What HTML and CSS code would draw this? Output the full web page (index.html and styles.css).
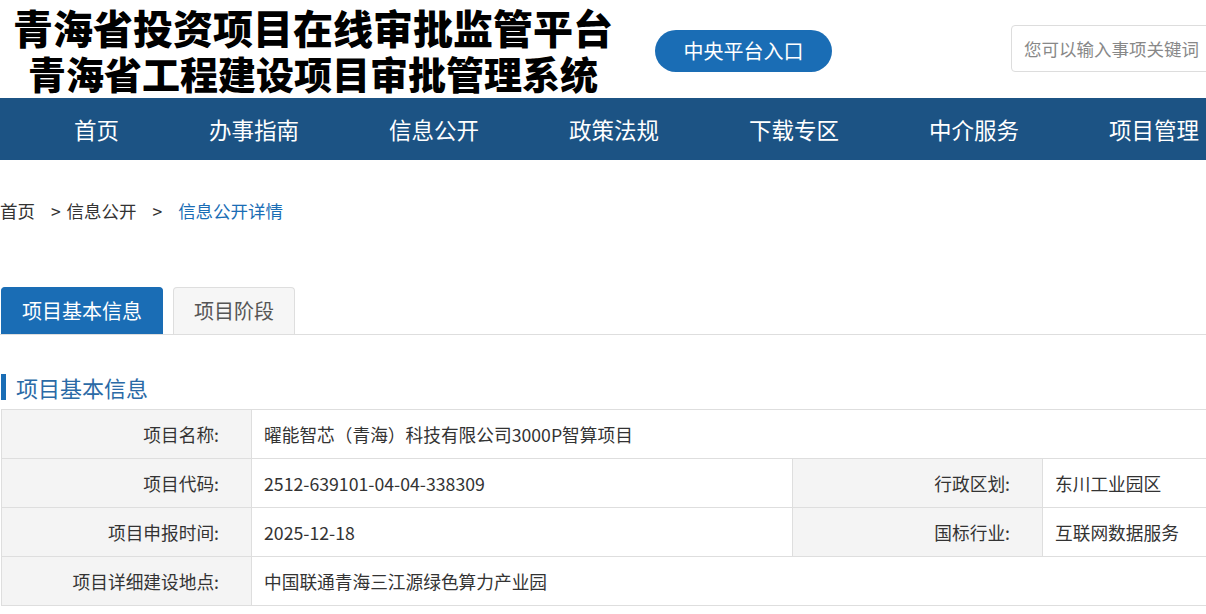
FILE: index.html
```html
<!DOCTYPE html>
<html lang="zh-CN">
<head>
  <meta charset="UTF-8" />
  <title>青海省投资项目在线审批监管平台</title>
  <link rel="stylesheet" href="styles.css">
</head>
<body>
  <header class="top">
    <div class="logo">
      <div class="logo-line one">青海省投资项目在线审批监管平台</div>
      <div class="logo-line two">青海省工程建设项目审批管理系统</div>
    </div>
    <a class="center-btn" href="#">中央平台入口</a>
    <div class="search">
      <input type="text" placeholder="您可以输入事项关键词">
    </div>
  </header>

  <nav class="mainnav">
    <a href="#">首页</a>
    <a href="#">办事指南</a>
    <a href="#">信息公开</a>
    <a href="#">政策法规</a>
    <a href="#">下载专区</a>
    <a href="#">中介服务</a>
    <a href="#">项目管理</a>
  </nav>

  <div class="container">
    <div class="crumbs">
      <a href="#">首页</a>
      <span class="sep">&gt;</span>
      <a href="#">信息公开</a>
      <span class="sep wide">&gt;</span>
      <span class="current">信息公开详情</span>
    </div>

    <div class="tabs">
      <a class="tab active" href="#">项目基本信息</a>
      <a class="tab" href="#">项目阶段</a>
    </div>

    <h3 class="section-title">项目基本信息</h3>

    <table class="info">
      <colgroup>
        <col class="c-label"><col class="c-value"><col class="c-label"><col class="c-value2">
      </colgroup>
      <tr>
        <th>项目名称:</th>
        <td colspan="3">曜能智芯（青海）科技有限公司3000P智算项目</td>
      </tr>
      <tr>
        <th>项目代码:</th>
        <td>2512-639101-04-04-338309</td>
        <th>行政区划:</th>
        <td>东川工业园区</td>
      </tr>
      <tr>
        <th>项目申报时间:</th>
        <td>2025-12-18</td>
        <th>国标行业:</th>
        <td>互联网数据服务</td>
      </tr>
      <tr>
        <th>项目详细建设地点:</th>
        <td colspan="3">中国联通青海三江源绿色算力产业园</td>
      </tr>
    </table>
  </div>
</body>
</html>
```

FILE: styles.css
```css
:root {
  --navy: #1c5384;
  --blue: #1a6db5;
  --line: #dedede;
}

html, body {
  overflow: hidden;
}

body {
  margin: 0;
  width: 1700px;
  font-family: "Microsoft YaHei", "Noto Sans CJK SC", sans-serif;
  color: #333;
  background: #fff;
}

a {
  text-decoration: none;
  color: inherit;
}

/* header */
.top {
  display: flex;
  align-items: center;
  height: 98px;
}
.logo {
  width: 626px;
  text-align: center;
  color: #000;
  font-weight: 900;
}
.logo-line {
  white-space: nowrap;
}
.logo-line.one {
  font-size: 40px;
  line-height: 46px;
  margin-top: 2px;
}
.logo-line.two {
  font-size: 38px;
  line-height: 46px;
}
.center-btn {
  margin-left: 29px;
  width: 177px;
  height: 42px;
  line-height: 42px;
  border-radius: 21px;
  background: var(--blue);
  color: #fff;
  text-align: center;
  font-size: 20px;
  margin-top: 4px;
}
.search {
  margin-left: 179px;
  margin-top: -2px;
}
.search input {
  width: 300px;
  height: 47px;
  box-sizing: border-box;
  border: 1px solid #ddd;
  border-radius: 4px;
  padding: 0 12px;
  font-family: inherit;
  font-size: 17.5px;
  outline: none;
}
.search input::placeholder {
  color: #888;
}

/* nav */
.mainnav {
  display: flex;
  gap: 90px;
  height: 62px;
  align-items: center;
  padding-left: 74px;
  background: var(--navy);
}
.mainnav a {
  color: #fff;
  font-size: 22.5px;
}

/* content */
.crumbs {
  margin-top: 38px;
  font-size: 17.5px;
  color: #333;
}
.crumbs .sep {
  margin: 0 2px 0 12px;
}
.crumbs .sep.wide {
  margin: 0 12px 0 12px;
}
.crumbs .current {
  color: var(--blue);
}

.tabs {
  display: flex;
  gap: 10px;
  margin-top: 64px;
  padding-left: 1px;
  border-bottom: 1px solid var(--line);
}
.tab {
  height: 46px;
  line-height: 46px;
  padding: 0 20px;
  font-size: 20px;
  border: 1px solid var(--line);
  border-bottom: none;
  border-radius: 4px 4px 0 0;
  background: #f6f6f6;
  color: #555;
}
.tab.active {
  background: var(--blue);
  border-color: var(--blue);
  color: #fff;
}

.section-title {
  margin: 39px 0 9px 1px;
  padding-left: 10px;
  border-left: 5px solid var(--blue);
  font-size: 22px;
  font-weight: normal;
  line-height: 26px;
  color: #2b6aa6;
}

.info {
  table-layout: fixed;
  width: 1600px;
  border-collapse: collapse;
  margin-left: 1px;
  font-size: 17.7px;
  color: #333;
}
.info .c-label { width: 250px; }
.info .c-value { width: 541px; }
.info th,
.info td {
  height: 48px;
  border: 1px solid var(--line);
  padding: 0 12px;
  text-align: left;
  font-weight: normal;
  white-space: nowrap;
}
.info th {
  background: #f4f4f4;
  text-align: right;
  padding-right: 32px;
}
```
